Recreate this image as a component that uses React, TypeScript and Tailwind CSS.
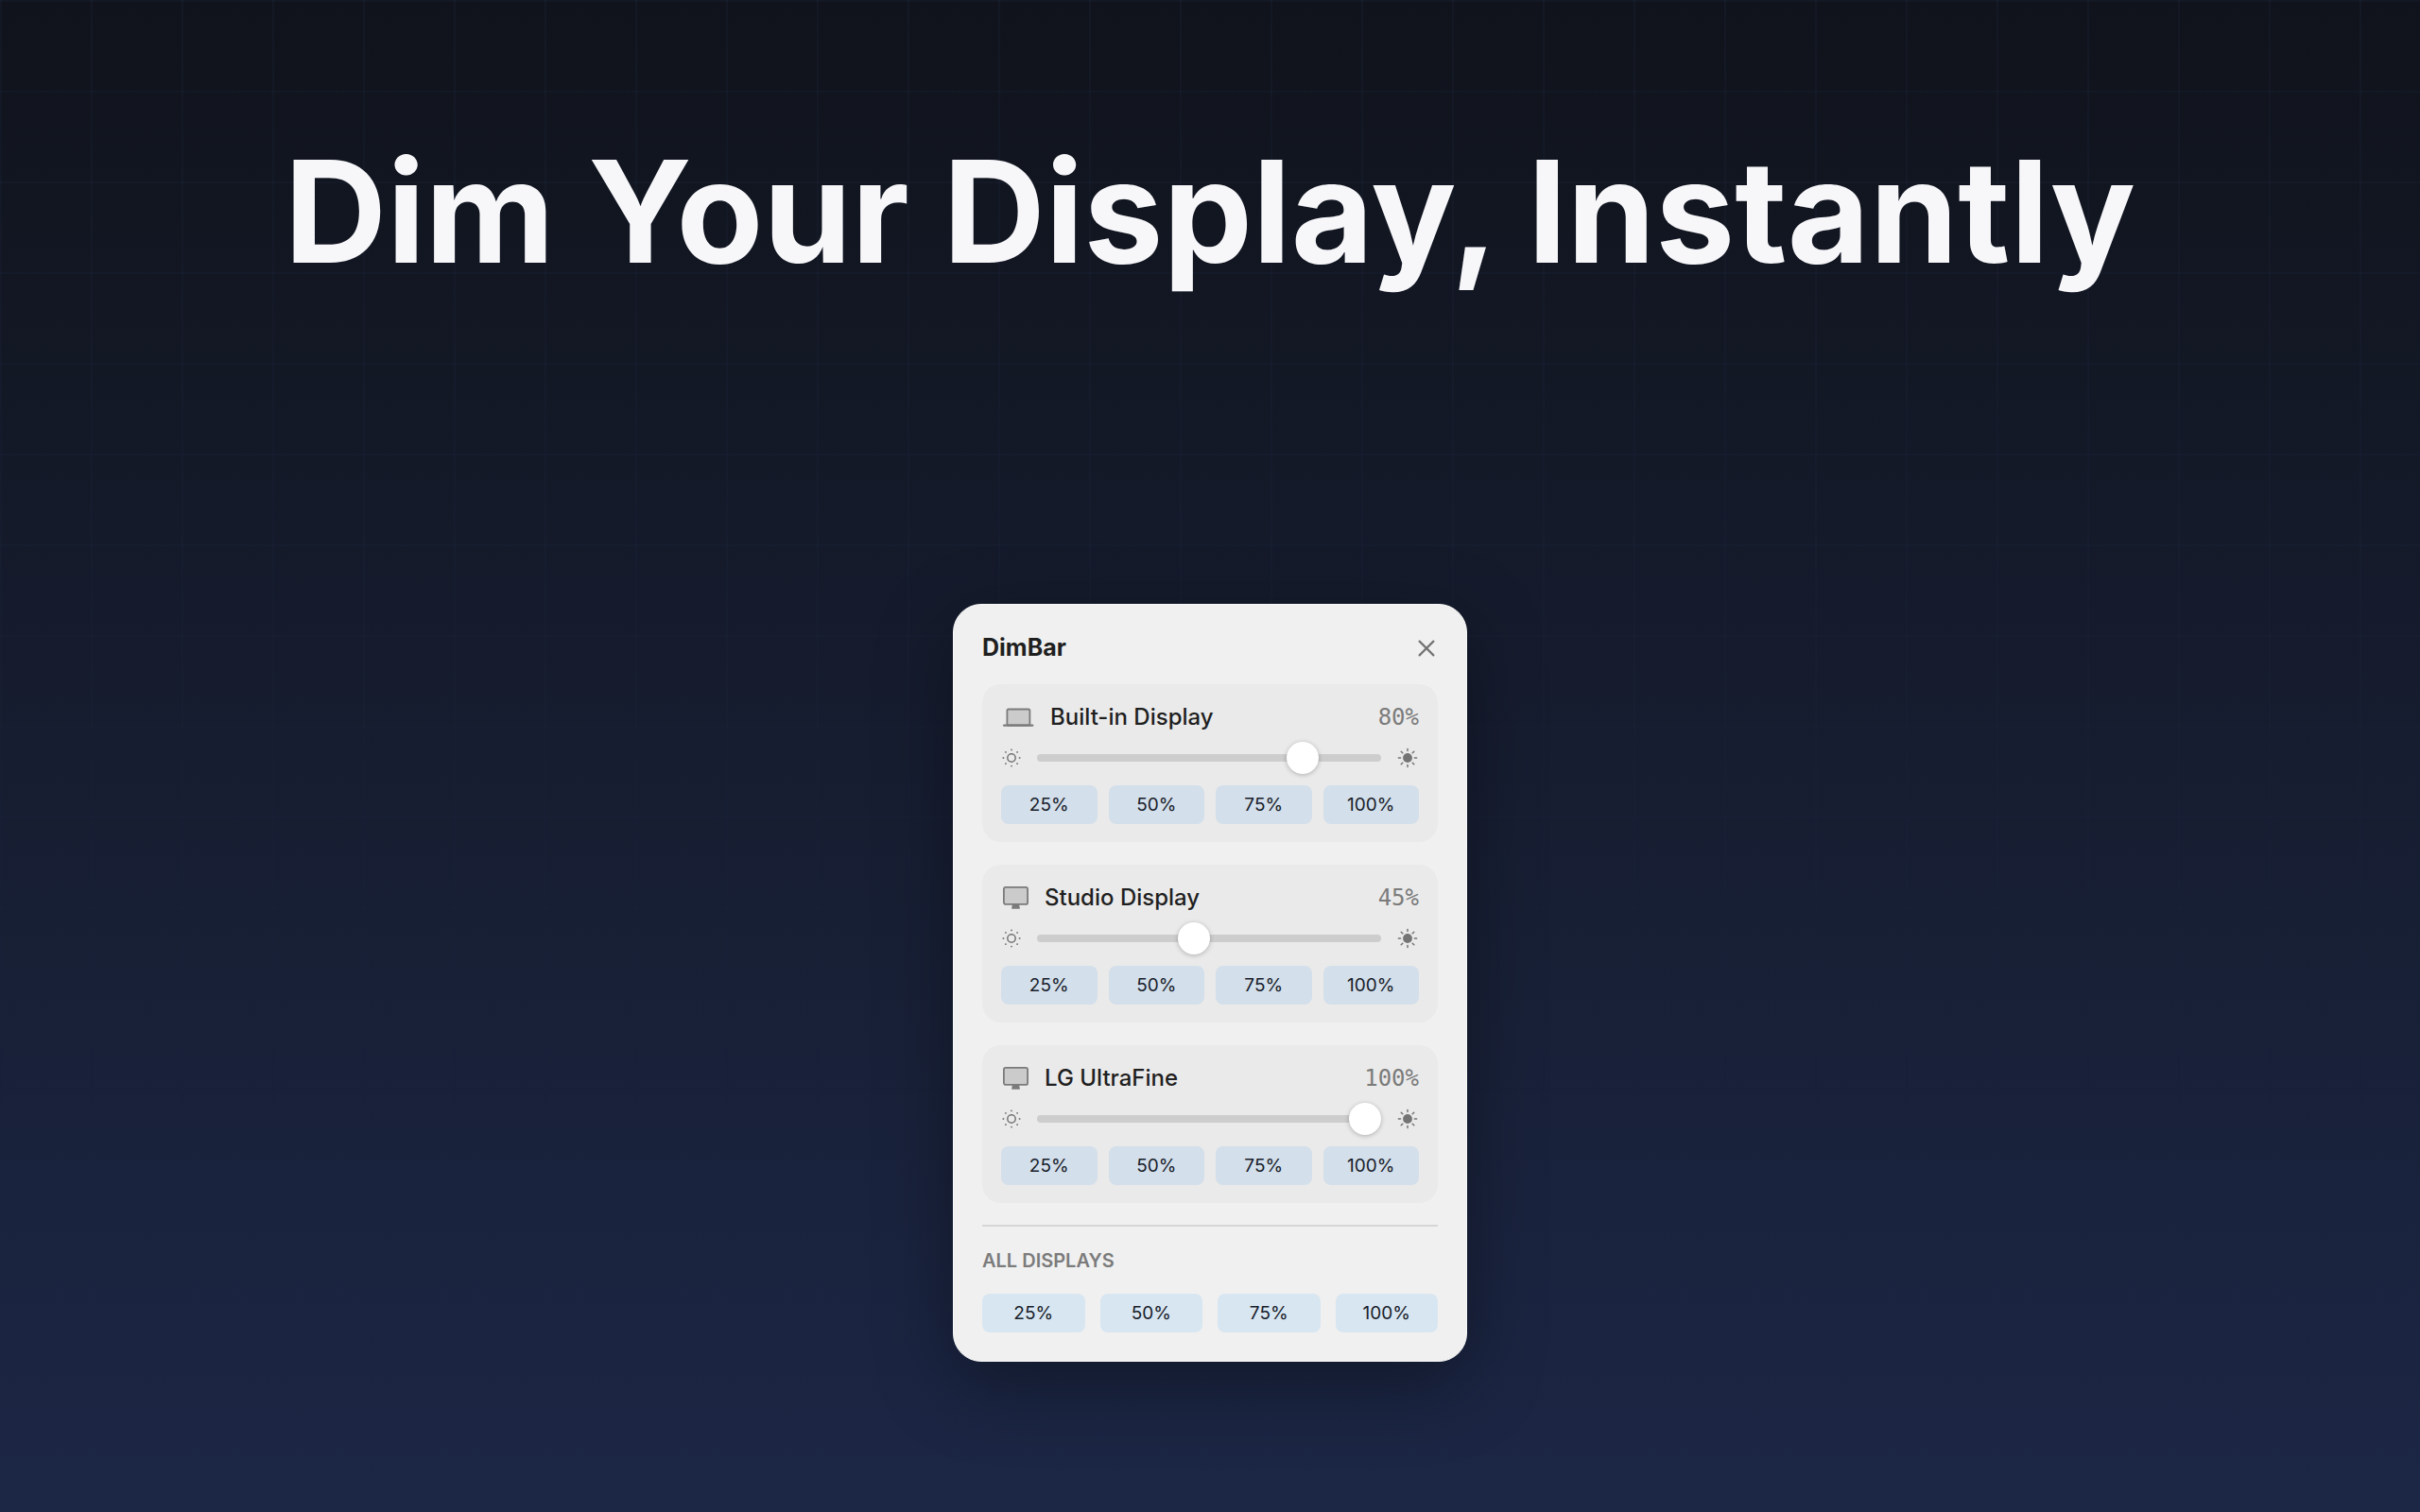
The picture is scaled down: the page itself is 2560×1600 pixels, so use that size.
import { useState } from 'react'

const PRESETS = [25, 50, 75, 100]

type DisplayKind = 'laptop' | 'monitor'

interface Display {
  id: string
  name: string
  kind: DisplayKind
  level: number
}

const INITIAL_DISPLAYS: Display[] = [
  { id: 'built-in', name: 'Built-in Display', kind: 'laptop', level: 80 },
  { id: 'studio', name: 'Studio Display', kind: 'monitor', level: 45 },
  { id: 'ultrafine', name: 'LG UltraFine', kind: 'monitor', level: 100 },
]

function LaptopIcon() {
  return (
    <svg className="h-6 w-9 shrink-0" viewBox="0 0 36 24" fill="none" aria-hidden="true">
      <rect x="6.4" y="3.5" width="24" height="17" rx="1.6" fill="#cbcbcb" stroke="#7b7b7b" strokeWidth="1.8" />
      <rect x="2" y="19.4" width="32.4" height="2.4" rx="1.2" fill="#7b7b7b" />
    </svg>
  )
}

function MonitorIcon() {
  return (
    <svg className="h-6 w-[30px] shrink-0" viewBox="0 0 30 24" fill="none" aria-hidden="true">
      <rect x="2.9" y="0.9" width="25.2" height="18" rx="2" fill="#cbcbcb" stroke="#7b7b7b" strokeWidth="1.8" />
      <path d="M12 19h7l.9 4.1a.6.6 0 0 1-.6.7h-7.6a.6.6 0 0 1-.6-.7z" fill="#7b7b7b" />
    </svg>
  )
}

function SunMinIcon() {
  return (
    <svg className="size-[22px] shrink-0" viewBox="-11 -11 22 22" fill="none" aria-hidden="true">
      <circle r="4.2" stroke="#747474" strokeWidth="1.5" />
      {[0, 45, 90, 135, 180, 225, 270, 315].map((deg) => (
        <circle key={deg} cx="8.6" r="0.95" fill="#747474" transform={`rotate(${deg})`} />
      ))}
    </svg>
  )
}

function SunMaxIcon() {
  return (
    <svg className="size-6 shrink-0" viewBox="-12 -12 24 24" fill="none" aria-hidden="true">
      <circle r="4.9" fill="#747474" />
      {[0, 45, 90, 135, 180, 225, 270, 315].map((deg) => (
        <path
          key={deg}
          d="M7.4 0H9.6"
          stroke="#747474"
          strokeWidth="1.5"
          strokeLinecap="round"
          transform={`rotate(${deg})`}
        />
      ))}
    </svg>
  )
}

function DisplayCard({ display, onChange }: { display: Display; onChange: (level: number) => void }) {
  return (
    <section className="rounded-[20px] bg-[#eaeaea] px-5 pt-5 pb-[19px]">
      <div className="flex h-[29px] items-center gap-4">
        {display.kind === 'laptop' ? <LaptopIcon /> : <MonitorIcon />}
        <label htmlFor={display.id} className="flex-1 text-2xl font-medium text-[#1f1f1f]">
          {display.name}
        </label>
        <output htmlFor={display.id} className="font-['DejaVu_Sans_Mono',monospace] text-2xl text-[#7b7b7b]">
          {display.level}%
        </output>
      </div>

      <div className="mt-3 flex items-center gap-4">
        <SunMinIcon />
        <input
          id={display.id}
          type="range"
          min={0}
          max={100}
          value={display.level}
          onChange={(e) => onChange(Number(e.target.value))}
          className="h-[34px] min-w-0 flex-1 cursor-pointer appearance-none bg-transparent [&::-webkit-slider-runnable-track]:h-2 [&::-webkit-slider-runnable-track]:rounded-full [&::-webkit-slider-runnable-track]:bg-[#cdcdcd] [&::-webkit-slider-thumb]:-mt-[13px] [&::-webkit-slider-thumb]:size-[34px] [&::-webkit-slider-thumb]:appearance-none [&::-webkit-slider-thumb]:rounded-full [&::-webkit-slider-thumb]:bg-white [&::-webkit-slider-thumb]:shadow-[0_1px_5px_rgba(0,0,0,0.25)]"
        />
        <SunMaxIcon />
      </div>

      <div className="mt-3 grid grid-cols-4 gap-3">
        {PRESETS.map((preset) => (
          <button
            key={preset}
            type="button"
            onClick={() => onChange(preset)}
            className="h-[41px] rounded-lg bg-[#d3dfea] pt-px text-[19px] text-[#17202a]"
          >
            {preset}%
          </button>
        ))}
      </div>
    </section>
  )
}

export default function App() {
  const [displays, setDisplays] = useState(INITIAL_DISPLAYS)

  const setLevel = (id: string, level: number) =>
    setDisplays((prev) => prev.map((d) => (d.id === id ? { ...d, level } : d)))

  const setAll = (level: number) => setDisplays((prev) => prev.map((d) => ({ ...d, level })))

  return (
    <div className="relative min-h-screen bg-linear-to-b from-[#10131b] to-[#1c2746] font-['Inter',sans-serif]">
      {/* Grid lines, fading out towards the bottom */}
      <div className="pointer-events-none absolute inset-0 bg-[linear-gradient(to_right,rgba(70,100,160,0.07)_2px,transparent_2px),linear-gradient(to_bottom,rgba(70,100,160,0.07)_2px,transparent_2px)] mask-[linear-gradient(to_bottom,black,transparent_75%)] bg-size-[96px_96px]" />

      <main className="relative flex flex-col items-center pt-[144px] pb-[159px]">
        <h1 className="text-center text-[150px] leading-[160px] font-bold text-[#f7f7fa]">Dim Your Display, Instantly</h1>

        {/* Menu bar popover */}
        <div className="mt-[335px] w-[544px] rounded-[30px] border border-[#f8f8f8] bg-[#f0f0f0] p-[30px] shadow-[0_24px_80px_rgba(0,0,0,0.35)]">
          <header className="mb-[22px] flex h-8 items-center justify-between">
            <h2 className="text-[25px] font-bold text-[#1f1f1f]">DimBar</h2>
            <button type="button" aria-label="Close" className="flex h-8 w-6 items-center justify-center">
              <svg className="size-5" viewBox="0 0 20 20" fill="none" stroke="#747474" strokeWidth="2.2" strokeLinecap="round">
                <path d="M2.6 2.6l14.8 14.8M17.4 2.6L2.6 17.4" />
              </svg>
            </button>
          </header>

          <div className="flex flex-col gap-6">
            {displays.map((display) => (
              <DisplayCard key={display.id} display={display} onChange={(level) => setLevel(display.id, level)} />
            ))}
          </div>

          <section className="mt-[23px] border-t-2 border-[#d6d6d6] pt-6">
            <h3 className="text-xl leading-6 font-semibold text-[#7b7b7b]">ALL DISPLAYS</h3>
            <div className="mt-[23px] grid grid-cols-4 gap-4">
              {PRESETS.map((preset) => (
                <button
                  key={preset}
                  type="button"
                  onClick={() => setAll(preset)}
                  className="h-[41px] rounded-lg bg-[#d8e6f1] pt-px text-[19px] text-[#17202a]"
                >
                  {preset}%
                </button>
              ))}
            </div>
          </section>
        </div>
      </main>
    </div>
  )
}
